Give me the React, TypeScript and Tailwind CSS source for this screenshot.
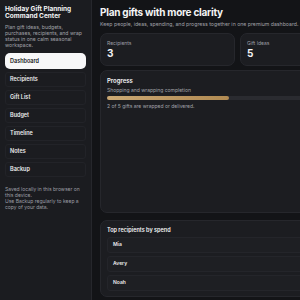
const navItems = ["Recipients", "Gift List", "Budget", "Timeline", "Notes", "Backup"];
const topRecipients = ["Mia", "Avery", "Noah"];

function StatCard({ label, value }: { label: string; value: string }) {
  return (
    <div className="w-[135px] shrink-0 h-[33px] rounded-[7px] border border-[#26272c] bg-[#1c1d21] px-[6px] pt-[6px]">
      <div className="text-[5px] leading-[6px] text-[#9d9ea5]">{label}</div>
      <div className="mt-[1px] text-[10px] leading-[12px] font-bold text-[#f4f4f5]">{value}</div>
    </div>
  );
}

export default function App() {
  return (
    <div
      className="flex w-[300px] h-[300px] overflow-hidden bg-[#131417] text-[#f4f4f5]"
      style={{ fontFamily: "Inter, 'Noto Sans', sans-serif" }}
    >
      <aside className="w-[92px] shrink-0 h-full border-r border-[#26272c] bg-[#1b1c20] px-[5px] pt-[6px]">
        <h1 className="text-[6.5px] leading-[7px] font-bold">Holiday Gift Planning Command Center</h1>
        <p className="mt-[4px] text-[5.1px] leading-[6px] text-[#a1a2a8]">
          Plan gift ideas, budgets, purchases, recipients, and wrap status in one calm seasonal workspace.
        </p>
        <nav className="mt-[5px] flex flex-col gap-[3px]">
          <div className="h-[16px] flex items-center rounded-[5px] bg-[#f7f7f8] px-[5px] text-[5.5px] font-semibold text-[#16171a]">
            Dashboard
          </div>
          {navItems.map((item) => (
            <div
              key={item}
              className="h-[15px] flex items-center rounded-[3px] border border-[#222328] bg-[#1b1c20] px-[4px] text-[5.5px] font-semibold text-[#ececee]"
            >
              {item}
            </div>
          ))}
        </nav>
        <p className="mt-[9px] text-[5px] leading-[6px] text-[#9d9ea5]">
          Saved locally in this browser on this device.
          <br />
          Use Backup regularly to keep a copy of your data.
        </p>
      </aside>

      <main className="w-[420px] shrink-0 px-[8px] pt-[6px]">
        <h2 className="text-[10px] leading-[13px] font-bold tracking-tight">Plan gifts with more clarity</h2>
        <p className="mt-[2px] text-[5.2px] leading-[6px] text-[#a1a2a8] whitespace-nowrap">
          Keep people, ideas, spending, and progress together in one premium dashboard.
        </p>

        <div className="mt-[6px] flex gap-[5px]">
          <StatCard label="Recipients" value="3" />
          <StatCard label="Gift Ideas" value="5" />
        </div>

        <section className="mt-[4px] h-[143px] rounded-[7px] border border-[#26272c] bg-[#1c1d21] px-[6px] pt-[6px]">
          <div className="text-[6px] leading-[7px] font-semibold">Progress</div>
          <div className="mt-[3px] text-[5px] leading-[6px] text-[#a1a2a8]">Shopping and wrapping completion</div>
          <div className="mt-[3px] h-[4px] rounded-full bg-[#2a2b30]">
            <div className="h-full w-[122px] rounded-full bg-gradient-to-r from-[#caa874] to-[#b08a52]" />
          </div>
          <div className="mt-[3px] text-[5px] leading-[6px] text-[#a1a2a8]">2 of 5 gifts are wrapped or delivered.</div>
        </section>

        <section className="mt-[7px] h-[77px] rounded-[7px] border border-[#26272c] bg-[#1c1d21] px-[6px] pt-[6px]">
          <div className="text-[5.5px] leading-[7px] font-semibold">Top recipients by spend</div>
          <div className="mt-[3px] flex flex-col gap-[3px]">
            {topRecipients.map((name) => (
              <div
                key={name}
                className="h-[16px] flex items-center rounded-[3px] border border-[#24252a] bg-[#1e1f23] px-[5px] text-[5px] font-semibold text-[#ececee]"
              >
                {name}
              </div>
            ))}
          </div>
        </section>
      </main>
    </div>
  );
}
